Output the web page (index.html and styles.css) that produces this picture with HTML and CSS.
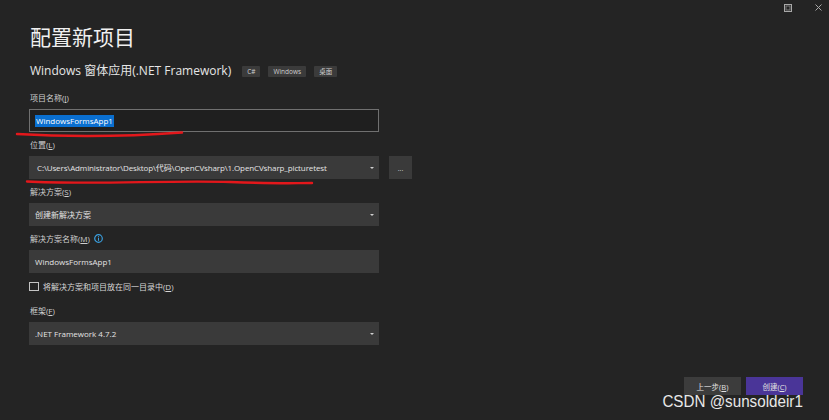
FILE: index.html
```html
<!DOCTYPE html>
<html lang="zh-CN">
<head>
<meta charset="utf-8">
<title>配置新项目</title>
<link rel="stylesheet" href="styles.css">
</head>
<body>
<div class="window">
  <div class="titlebar">
    <svg class="ctl" width="8" height="8" viewBox="0 0 8 8"><rect x="0.5" y="0.5" width="7" height="7" fill="none" stroke="#a8a8a8" stroke-width="1"/><rect x="2" y="2" width="4" height="4" fill="none" stroke="#7a7a7a" stroke-width="1"/></svg>
    <svg class="ctl" width="7" height="7" viewBox="0 0 7 7"><path d="M0.5 0.5 L6.5 6.5 M6.5 0.5 L0.5 6.5" stroke="#a8a8a8" stroke-width="1"/></svg>
  </div>
  <div class="content">
    <h1 class="title">配置新项目</h1>
    <div class="subtitle">
      <span class="subtitle-text">Windows 窗体应用(.NET Framework)</span>
      <div class="tags">
        <span class="tag">C#</span>
        <span class="tag">Windows</span>
        <span class="tag">桌面</span>
      </div>
    </div>

    <div class="group">
      <div class="label">项目名称(<u>J</u>)</div>
      <div class="field input"><span class="sel">WindowsFormsApp1</span></div>
    </div>

    <div class="group">
      <div class="label">位置(<u>L</u>)</div>
      <div class="row">
        <div class="field select"><span class="path">C:\Users\Administrator\Desktop\代码\OpenCVsharp\1.OpenCVsharp_picturetest</span><i class="caret"></i></div>
        <div class="browse">...</div>
      </div>
    </div>

    <div class="group">
      <div class="label">解决方案(<u>S</u>)</div>
      <div class="field select"><span>创建新解决方案</span><i class="caret"></i></div>
    </div>

    <div class="group">
      <div class="label">解决方案名称(<u>M</u>)<svg class="info" width="9" height="9" viewBox="0 0 9 9"><circle cx="4.5" cy="4.5" r="3.8" fill="none" stroke="#3aa0e0" stroke-width="1.2"/><rect x="4" y="3.8" width="1" height="3" fill="#3aa0e0"/><rect x="4" y="2.2" width="1" height="1" fill="#3aa0e0"/></svg></div>
      <div class="field"><span>WindowsFormsApp1</span></div>
    </div>

    <label class="check">
      <span class="box"></span>
      <span>将解决方案和项目放在同一目录中(<u>D</u>)</span>
    </label>

    <div class="group">
      <div class="label">框架(<u>F</u>)</div>
      <div class="field select"><span>.NET Framework 4.7.2</span><i class="caret"></i></div>
    </div>
  </div>

  <div class="footer">
    <button class="btn">上一步(<u>B</u>)</button>
    <button class="btn primary">创建(<u>C</u>)</button>
  </div>

  <svg class="marks" width="829" height="420" viewBox="0 0 829 420">
    <path d="M17 134 C 60 136.5, 120 137, 182 132.5" fill="none" stroke="#e3171b" stroke-width="2.4" stroke-linecap="round"/>
    <path d="M27 181.5 C 90 185, 170 180, 230 182 S 290 183, 312 183" fill="none" stroke="#e3171b" stroke-width="2.4" stroke-linecap="round"/>
  </svg>
  <div class="watermark">CSDN @sunsoldeir1</div>
</div>
</body>
</html>
```

FILE: styles.css
```css
html, body {
  margin: 0;
  padding: 0;
  background: #252526;
}

body {
  font-family: "Open Sans", "Noto Sans CJK SC", sans-serif;
  color: #d6d6d6;
}

.window {
  position: relative;
  width: 829px;
  height: 420px;
  overflow: hidden;
  display: flex;
  flex-direction: column;
  background: #242424;
}

.titlebar {
  height: 16px;
  box-sizing: border-box;
  padding: 4px 7px 0 0;
  display: flex;
  justify-content: flex-end;
  align-items: flex-start;
  gap: 23px;
}

.content {
  padding-left: 29px;
  width: 383px;
}

.title {
  margin: 6px 0 0 1px;
  font-family: "Noto Sans CJK SC", sans-serif;
  font-weight: 400;
  font-size: 21px;
  line-height: 28px;
  color: #f0f0f0;
}

.subtitle {
  margin-top: 13px;
  height: 16px;
  display: flex;
  align-items: center;
  gap: 11px;
  padding-left: 1px;
}

.subtitle-text {
  font-size: 12px;
  line-height: 16px;
  color: #e6e6e6;
  white-space: nowrap;
}

.tags {
  display: flex;
  gap: 8px;
}

.tag {
  background: #3b3b3b;
  color: #cfcfcf;
  font-size: 6.5px;
  line-height: 11px;
  height: 11px;
  padding: 0 5px;
  border-radius: 1px;
}

.group {
  margin-top: 13px;
}

.group + .group {
  margin-top: 7px;
}

.label {
  font-size: 8px;
  line-height: 12px;
  height: 12px;
  margin-bottom: 5px;
  padding-left: 1px;
  color: #cfcfcf;
  white-space: nowrap;
}

u {
  text-decoration-thickness: 1px;
  text-underline-offset: 1px;
}

.info {
  display: inline-block;
  vertical-align: -1px;
  margin-left: 4px;
}

.row {
  display: flex;
  gap: 10px;
}

.field {
  box-sizing: border-box;
  width: 350px;
  height: 23px;
  background: #3a3a3a;
  display: flex;
  align-items: center;
  justify-content: space-between;
  padding: 0 5px 0 6px;
  font-size: 8px;
  color: #e4e4e4;
  white-space: nowrap;
}

.field.input {
  background: #1f1f1f;
  border: 1px solid #707070;
  padding-left: 5px;
}

.sel {
  background: #0a6fd0;
  color: #ffffff;
  line-height: 12px;
  padding: 0 1px;
}

.path {
  padding-left: 2px;
  letter-spacing: -0.12px;
}

.caret {
  width: 0;
  height: 0;
  border-left: 2px solid transparent;
  border-right: 2px solid transparent;
  border-top: 2px solid #d0d0d0;
}

.browse {
  width: 23px;
  height: 23px;
  background: #3a3a3a;
  color: #d0d0d0;
  font-size: 7px;
  line-height: 26px;
  text-align: center;
}

.check {
  display: flex;
  align-items: center;
  gap: 4px;
  margin-top: 8px;
  height: 11px;
  font-size: 8px;
  color: #d6d6d6;
  white-space: nowrap;
}

.box {
  width: 10px;
  height: 9px;
  box-sizing: border-box;
  border: 1px solid #c4c4c4;
}

.check + .group {
  margin-top: 13px;
}

.footer {
  margin-top: auto;
  padding: 0 26px 25px 0;
  display: flex;
  justify-content: flex-end;
  gap: 5px;
}

.btn {
  width: 57px;
  height: 18px;
  border: none;
  margin: 0;
  padding: 0;
  background: #3c3c3c;
  color: #e0e0e0;
  font-family: "Open Sans", "Noto Sans CJK SC", sans-serif;
  font-size: 7.5px;
}

.btn.primary {
  background: #4a3598;
}

.marks {
  position: absolute;
  left: 0;
  top: 0;
  pointer-events: none;
}

.watermark {
  position: absolute;
  right: 26px;
  top: 392px;
  font-family: "Liberation Sans", sans-serif;
  font-size: 16px;
  line-height: 20px;
  color: #e8e8e8;
  transform: scaleX(0.95);
  transform-origin: right center;
  white-space: nowrap;
}
```
